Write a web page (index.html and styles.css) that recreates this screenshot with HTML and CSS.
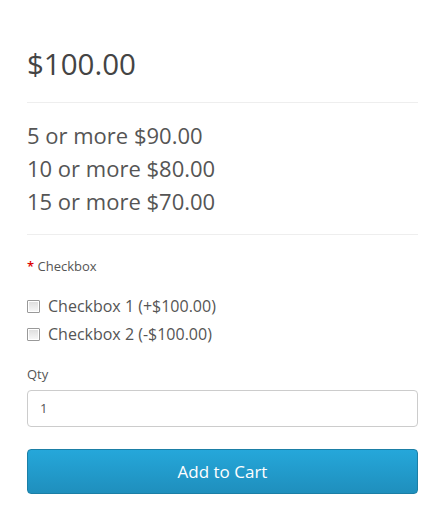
FILE: index.html
```html
<!DOCTYPE html>
<html>
<head>
<meta charset="utf-8">
<link rel="stylesheet" href="styles.css">
</head>
<body>
<div class="product">
  <ul class="prices">
    <li><h2 class="price">$100.00</h2></li>
    <li class="rule"></li>
    <li class="disc">5 or more $90.00</li>
    <li class="disc">10 or more $80.00</li>
    <li class="disc">15 or more $70.00</li>
  </ul>
  <div class="rule rule2"></div>
  <div class="group">
    <div class="label"><span class="req">*</span> Checkbox</div>
    <div class="checks">
      <label class="check"><span class="box"></span>Checkbox 1 (+$100.00)</label>
      <label class="check"><span class="box"></span>Checkbox 2 (-$100.00)</label>
    </div>
  </div>
  <div class="group qgroup">
    <div class="label">Qty</div>
    <div class="input">1</div>
  </div>
  <button class="btn">Add to Cart</button>
</div>
</body>
</html>
```
FILE: styles.css
```css
html, body { margin: 0; padding: 0; background: #fff; }
body { font-family: "Open Sans", "DejaVu Sans", sans-serif; color: #555; }
.product { width: 391px; padding: 47px 0 0 27px; }
.prices { list-style: none; margin: 0; padding: 0; }
.price { margin: 0; font-size: 29.5px; line-height: 33px; font-weight: 400; color: #444; }
.rule { height: 1px; background: #eee; }
.prices .rule { margin: 22px 0 16px; }
.disc { font-size: 22px; line-height: 33px; color: #555; }
.rule2 { margin-top: 16px; }
.group { margin-top: 21px; }
.label { font-size: 13px; line-height: 20px; color: #555; }
.req { color: #d00; font-weight: 600; }
.checks { margin-top: 16px; display: flex; flex-direction: column; }
.check { display: flex; align-items: center; font-size: 16px; line-height: 28px; color: #555; }
.box { width: 11px; height: 11px; border: 1px solid #999; border-radius: 1px; margin-right: 8px; background: linear-gradient(#ddd, #f8f8f8); box-shadow: inset 0 0 0 1px #fff; }
.qgroup { margin-top: 16px; }
.input { margin-top: 6px; height: 35px; border: 1px solid #ccc; border-radius: 4px; box-sizing: content-box; padding: 0 12px; font-size: 13px; line-height: 35px; color: #555; }
.btn { display: block; margin-top: 22px; width: 391px; height: 45px; border: 1px solid #1b7fa6; border-radius: 4px; background: linear-gradient(#25a7da, #1f8fbd); color: #fff; font-family: "Open Sans", sans-serif; font-size: 17px; padding: 0; }
```
